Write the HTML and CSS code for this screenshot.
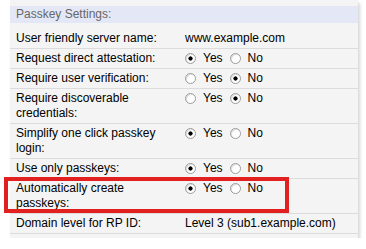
FILE: index.html
```html
<!DOCTYPE html>
<html lang="en">
<head>
<meta charset="utf-8">
<title>Passkey Settings</title>
<link rel="stylesheet" href="styles.css">
</head>
<body>
<div class="page">
  <section class="panel">
    <div class="panel-title">Passkey Settings:</div>
    <div class="rows">
      <div class="row">
        <div class="label">User friendly server name:</div>
        <div class="value">www.example.com</div>
      </div>
      <div class="row">
        <div class="label">Request direct attestation:</div>
        <div class="value choice">
          <label class="opt"><input class="radio" type="radio" name="att" checked>Yes</label>
          <label class="opt"><input class="radio" type="radio" name="att">No</label>
        </div>
      </div>
      <div class="row">
        <div class="label">Require user verification:</div>
        <div class="value choice">
          <label class="opt"><input class="radio" type="radio" name="uv">Yes</label>
          <label class="opt"><input class="radio" type="radio" name="uv" checked>No</label>
        </div>
      </div>
      <div class="row">
        <div class="label">Require discoverable credentials:</div>
        <div class="value choice">
          <label class="opt"><input class="radio" type="radio" name="dc">Yes</label>
          <label class="opt"><input class="radio" type="radio" name="dc" checked>No</label>
        </div>
      </div>
      <div class="row">
        <div class="label">Simplify one click passkey login:</div>
        <div class="value choice">
          <label class="opt"><input class="radio" type="radio" name="oc" checked>Yes</label>
          <label class="opt"><input class="radio" type="radio" name="oc">No</label>
        </div>
      </div>
      <div class="row">
        <div class="label">Use only passkeys:</div>
        <div class="value choice">
          <label class="opt"><input class="radio" type="radio" name="op" checked>Yes</label>
          <label class="opt"><input class="radio" type="radio" name="op">No</label>
        </div>
      </div>
      <div class="row marked">
        <div class="label">Automatically create passkeys:</div>
        <div class="value choice">
          <label class="opt"><input class="radio" type="radio" name="ac" checked>Yes</label>
          <label class="opt"><input class="radio" type="radio" name="ac">No</label>
        </div>
        <span class="callout"></span>
      </div>
      <div class="row">
        <div class="label">Domain level for RP ID:</div>
        <div class="value">Level 3 (sub1.example.com)</div>
      </div>
    </div>
  </section>
</div>
</body>
</html>
```

FILE: styles.css
```css
html, body {
  margin: 0;
  background: #ffffff;
}

body {
  font-family: "Liberation Sans", Arial, sans-serif;
  font-size: 12px;
  line-height: 15px;
  color: #000;
}

.page {
  padding: 0 8px 0 10px;
}

.panel {
  background: #f4f4f4;
  padding: 6px 0 4px;
  box-shadow: 2px 3px 3px rgba(0, 0, 0, 0.16);
}

.panel-title {
  background: #e4e8f6;
  color: #666;
  padding: 1px 6px;
  margin-bottom: 6px;
}

.row {
  position: relative;
  display: grid;
  grid-template-columns: 169px 1fr;
  padding: 2px 0 2px 6px;
  border-bottom: 1px solid #dcdcdc;
}

.label {
  padding-right: 8px;
}

.choice {
  display: flex;
  align-items: flex-start;
}

.opt {
  display: inline-flex;
  align-items: center;
  height: 15px;
  margin-right: 7px;
}

.radio {
  appearance: none;
  -webkit-appearance: none;
  box-sizing: border-box;
  width: 11px;
  height: 11px;
  margin: 0 7px 0 0;
  border: 1px solid #9c9c9c;
  border-radius: 50%;
  background: #fff;
  box-shadow: inset 1px 1px 0 #dedede;
}

.radio:checked {
  background: radial-gradient(circle at 50% 50%, #000 0 1.8px, #fff 2.4px);
}

.callout {
  position: absolute;
  left: -6px;
  top: -2px;
  width: 285px;
  height: 36px;
  box-sizing: border-box;
  border: 4px solid #e2201f;
  pointer-events: none;
}
```
